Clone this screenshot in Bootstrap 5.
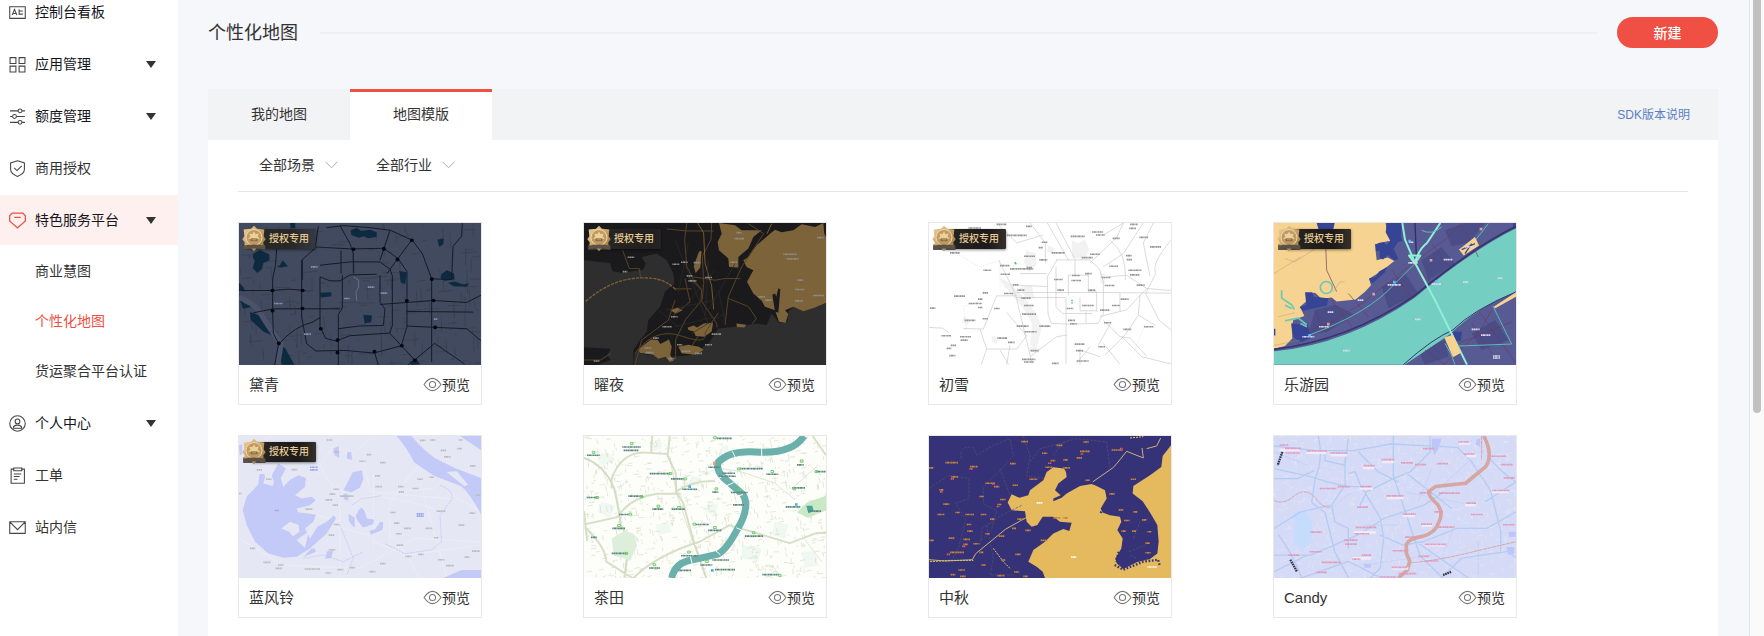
<!DOCTYPE html>
<html lang="zh-CN">
<head>
<meta charset="utf-8">
<meta name="viewport" content="width=device-width, initial-scale=1">
<title>个性化地图</title>
<link href="https://cdn.jsdelivr.net/npm/bootstrap@5.3.0/dist/css/bootstrap.min.css" rel="stylesheet">
<style>
body{font-family:"Liberation Sans","Noto Sans CJK SC",sans-serif;font-size:14px;line-height:20px;color:#333;background:#f6f7fb;height:100vh;overflow:hidden}
.side{width:178px;background:#fff}
.side-list{margin-top:-14px}
.side-list>li{margin:1px 0}
.side-link{height:50px;padding:0 22px 0 9px;color:#15151c;text-decoration:none}
.side-link.plain{color:#333}
.side-link.current{background:#fdf0ef}
.side-link svg{width:17px;height:17px;margin-right:9px;fill:none;stroke:#444;stroke-width:1}
.side-link.current svg{stroke:#f04f43;stroke-width:1.2}
.side-link .tri{margin-left:auto;border:5px solid transparent;border-top:7px solid #333;border-bottom:0}
.sub-list{padding-top:1px}
.sub-link{height:50px;padding-left:35px;color:#333;text-decoration:none}
.sub-link.current{color:#f04f43}
.work{padding:0 31px 0 30px}
.head{height:89px;padding-bottom:24px}
.head h1{font-size:18px;line-height:26px;font-weight:400;color:#333}
.head .rule{height:2px;background:#eff0f3;margin:0 20px 0 22px}
.btn-new{width:101px;height:31px;font-size:14px;line-height:20px;font-weight:500;background:#f04f43;color:#fff;border:0;padding:0}
.btn-new:hover{background:#e0443a;color:#fff}
.tabs{background:#f2f3f5;height:51px}
.tabs .tab-btn{width:142px;height:51px;border:0;border-top:3px solid transparent;background:none;color:#333;padding:0 0 4px}
.tabs .tab-btn.active{background:#fff;border-top-color:#f04f43}
.sdk{font-size:12px;color:#5b7ec4;margin-right:28px}
.panel{padding:0 30px}
.filters{height:52px;padding:0 21px 2px;gap:38px;border-bottom:1px solid #e6e6e6}
.filters select{width:79px;padding:0;border:0;font-size:14px;line-height:20px;color:#333;background:transparent url("data:image/svg+xml,%3Csvg xmlns='http://www.w3.org/2000/svg' viewBox='0 0 13 8' fill='none' stroke='%23aaa'%3E%3Cpath d='M.6.8l5.9 6 5.9-6'/%3E%3C/svg%3E") no-repeat right center/13px 8px}
.tiles{padding:30px 70px 0 0;row-gap:30px}
.tile{width:244px;border:1px solid #e8e8e8;border-radius:0}
.tile .map{height:142px;display:block;width:100%}
.tile-foot{height:39px;padding:0 11px 0 10px}
.tile-foot h2{font-size:15px;line-height:22px;font-weight:400}
.view-btn{color:#333;border:0;padding:0;font-size:14px;line-height:20px}
.view-btn svg{width:19px;height:15px;fill:none;stroke:#777;stroke-width:1}
.vip{left:3px;top:2px;height:27px}
.vip svg{width:24px;height:27px;position:relative;z-index:1}
.vip span{margin-left:-14px;height:20px;width:64px;padding:0 0 1px 17px;font-size:10px;line-height:19px;font-weight:500;color:#e8cb94;background:linear-gradient(90deg,#2a2725,#1b1919 70%,#34302c);border-radius:1px;box-shadow:0 1px 3px #0007;white-space:nowrap}
.dim .vip span{background:linear-gradient(90deg,#292827,#24221fdd 60%,#2b2a2c80)}
.bar{width:15px;background:#fafafa;border-left:1px solid #e4e4e4;padding:0 3px}
.bar i{width:8px;height:413px;background:#c1c1c1;border-radius:0 0 4px 4px;display:block}
.lb{fill:none;stroke-width:5;stroke-dasharray:4 1 7 1 3 1}
.ln{fill:none;stroke-linejoin:round}
</style>
</head>
<body class="d-flex">
<svg width="0" height="0" class="position-absolute">
<defs>
<linearGradient id="gold" x2="1" y2="1"><stop stop-color="#f1d59c"/><stop offset=".5" stop-color="#c9a468"/><stop offset="1" stop-color="#8c6c3d"/></linearGradient>
<symbol id="medal" viewBox="0 0 72 80"><path d="M4 58h66v16H4z" fill="#3a352f"/><path d="M36 2l9 9 22 2-2 20 6 9-7 9 1 14-19 2-10 11-10-11-19-2 1-14-7-9 6-9-2-20 22-2z" fill="url(#gold)"/><circle cx="36" cy="37" r="24" fill="#c09a62" stroke="#f3dcaa" stroke-width="3"/><path d="M36 19l5 8 9-2-3 10 7 6H18l7-6-3-10 9 2z" fill="#ecd19a"/><path d="M26 40h20v8H26z" fill="#7d5f36"/><path d="M29 44h14" stroke="#edd095" stroke-width="2"/><path d="M4 62q32-8 66 0v12q-34-8-66 0z" fill="#5c5145"/></symbol>
<symbol id="eye" viewBox="0 0 18 14"><path d="M1 7q4-5.800 8-5.800T17 7q-4 5.800-8 5.800T1 7z"/><circle cx="9" cy="7" r="2.900"/></symbol>
</defs>
</svg>

<nav class="side flex-shrink-0 vh-100 overflow-hidden" aria-label="控制台">
<ul class="side-list list-unstyled mb-0 d-flex flex-column">
<li><a href="#" class="side-link d-flex align-items-center"><svg viewBox="0 0 16 16"><path d="M.7 2.500h14.600v11H.7zM3 10.500L5.200 5l2.200 5.500M3.800 9h2.800M9.500 5v5M9 6.500h4M9 9.500h4"/></svg>控制台看板</a></li>
<li><a href="#" class="side-link d-flex align-items-center"><svg viewBox="0 0 16 16"><path d="M1 1.500h5.500V7H1zM9.500 1.500H15V7H9.500zM1 9.500h5.500V15H1zM9.500 9.500H15V15H9.500z"/></svg>应用管理<span class="tri"></span></a></li>
<li><a href="#" class="side-link d-flex align-items-center"><svg viewBox="0 0 16 16"><path d="M1 2.700h7.500M12.300 2.700H15M1 8h2.300M7 8h8M1 13.500h7.500M12.300 13.500H15"/><circle cx="10.400" cy="2.700" r="1.800"/><circle cx="5.200" cy="8" r="1.800"/><circle cx="10.400" cy="13.500" r="1.800"/></svg>额度管理<span class="tri"></span></a></li>
<li><a href="#" class="side-link plain d-flex align-items-center"><svg viewBox="0 0 16 16"><path d="M8 .8l6.500 2v6Q14.500 13 8 15.500 1.500 13 1.500 8.800v-6zM4.800 7.500L7.500 10l4.500-4.500"/></svg>商用授权</a></li>
<li><a href="#" class="side-link current d-flex align-items-center"><svg viewBox="0 0 16 16"><path d="M3 1h10l2.400 2.500v5L8 15 .6 8.500v-5zM5 5h6"/></svg>特色服务平台<span class="tri"></span></a>
<ul class="sub-list list-unstyled">
<li><a href="#" class="sub-link d-flex align-items-center">商业慧图</a></li>
<li><a href="#" class="sub-link current d-flex align-items-center">个性化地图</a></li>
<li><a href="#" class="sub-link d-flex align-items-center">货运聚合平台认证</a></li>
</ul></li>
<li><a href="#" class="side-link d-flex align-items-center"><svg viewBox="0 0 16 16"><circle cx="8" cy="8" r="7.300"/><circle cx="8" cy="6" r="2.200"/><path d="M4 12.500q0-3 4-3t4 3z"/></svg>个人中心<span class="tri"></span></a></li>
<li><a href="#" class="side-link plain d-flex align-items-center"><svg viewBox="0 0 16 16"><path d="M4.500 2H2v13.300h12.500V2H12M4.500 1h7.500v2.500H4.500zM4.500 6.500h7M4.500 9h5.500M4.500 11.500h3.500"/></svg>工单</a></li>
<li><a href="#" class="side-link plain d-flex align-items-center"><svg viewBox="0 0 16 16"><path d="M.7 2.500h14.600v11H.7zM1 3l7 7 7-7"/></svg>站内信</a></li>
</ul>
</nav>

<main class="work flex-grow-1 d-flex flex-column vh-100 overflow-hidden">
<header class="head d-flex align-items-center flex-shrink-0">
<h1 class="mb-0">个性化地图</h1><span class="rule flex-grow-1"></span>
<button type="button" class="btn btn-new rounded-pill">新建</button>
</header>
<div class="tabs d-flex align-items-center flex-shrink-0">
<button type="button" class="tab-btn">我的地图</button>
<button type="button" class="tab-btn active">地图模版</button>
<a href="#" class="sdk ms-auto text-decoration-none">SDK版本说明</a>
</div>
<section class="panel bg-white flex-grow-1">
<div class="filters d-flex align-items-center">
<select class="form-select" aria-label="场景"><option>全部场景</option></select>
<select class="form-select" aria-label="行业"><option>全部行业</option></select>
</div>
<div class="tiles row row-cols-4 mx-0">

<div class="col px-0"><article class="card tile dim">
<svg class="map" viewBox="27 38 726 427" preserveAspectRatio="none" data-seed="3" data-street="#373d50" data-count="220">
<path fill="#414a5f" d="M27 38h726v427H27z"/><g class="streets"></g>
<g fill="#0e2a40"><path d="M70 130l20-10 28 12 0 18-18 8-4 18-14 12-14-14 6-22-6-12zM362 60l18-8 14 10 26-4 20 8v14l-26 4-12-6-16 4-22-8zM622 88l18-4v18l-12 8zM634 192l16-12 22 10 2 18-30 4-12-8zM654 218l20-4 24 8 20-2-8 10-40-2zM400 314l26 2-2 20-20 4zM508 182l22 4-4 36-14-6zM145 404l20 10 28 50h-38zM27 218l14 14 4 12-18-2zM27 262l16 18 26 10-30 6zM60 306l30 10 14 14-6 8 20 10 12 30-30-14-38-34zM270 248l34-2v12l-32 4zM140 170l10-6 8-14 16 18-20 4zM540 455l20-8 10 16-26 2zM180 38h16v16h-14z"/></g>
<path d="M27 262q46 16 66 50t60 90l-10 62" class="ln" stroke="#4d526b" stroke-width="16"/>
<g class="ln" stroke="#141a28" stroke-width="3"><path d="M140 115q0 50-12 90v100l2 65 16 30-12 65M27 241h100l50-4 50 4M70 308l60-12h200M255 110l110 6 96-2 42 30 28 40v165l-17 58-82 22-90-8-84 2-28-22-15-80V150l40-36 10-66M270 165l90-10h90l30 22 7 20v150l-8 22-120 8-40 16-32-8-17-36V200M270 200l30 12h30l30-18 80-2M337 195v98l-12 20v152M325 356l60-8 75-2 5-50-15-20v-80M290 52l50-6 80 6 62 8 65 30 30 40 28 76v250M545 90l-44 58-30 42M480 60l-30 90M330 46l30 54 10 30v60M697 38l-2 40-26 30-4 100-60-2M450 283l160-12 100 6 43-22M530 304l200 2M530 348l180 8 43 36M146 402q50-55 100-65l25-15M480 370l74 80 60-50 90 62M554 450l-20 15M433 425l12 40M333 120v70M217 150v60"/></g>
<g stroke="#295368" stroke-width="1" stroke-dasharray="4 5" class="ln"><path d="M142 115q0 50-12 90v100M255 112h200M272 157h170M219 150v200l25 75h150M450 285h160M330 350h130"/></g>
<g stroke="#06080f" stroke-width="11" stroke-linecap="round"><path d="M127 241h1M217 241h1M127 302h1M370 117h1M461 116h1M502 148h1M545 90h1M605 207h1M610 271h1M615 352h1M530 272h1M515 407h1M433 425h1M322 390h1M322 428h1M272 356h1M554 451h1M146 400h1M217 295h1"/></g>
<path class="lb" stroke="#858eb0" d="M243 170h20M413 231h20M452 249h20M342 265h18M132 280h26M222 372h22M612 327h10"/><path d="M370 200l16 10v20l-8 16 2 26" class="ln" stroke="#666d87" stroke-width="3"/>
</svg>
<div class="vip position-absolute d-flex align-items-center"><svg><use href="#medal"/></svg><span>授权专用</span></div>
<div class="tile-foot d-flex justify-content-between align-items-center"><h2 class="mb-0">黛青</h2><button type="button" class="view-btn btn d-flex align-items-center"><svg><use href="#eye"/></svg>预览</button></div></article></div>

<div class="col px-0"><article class="card tile dim">
<svg class="map" viewBox="27 38 726 427" preserveAspectRatio="none">
<path fill="#1a1a1d" d="M27 38h726v427H27z"/>
<path fill="#2e2e2f" d="M27 150L75 155 105 158 112 182 140 188 205 178 212 160 200 140 245 130 275 150 295 190 298 220 270 245 255 290 220 330 215 365 195 390 175 420 175 465 27 465zM753 270L720 290 685 300 655 290 640 305 638 335 612 338 590 310 575 345 545 340 480 350 430 355 400 400 350 435 290 440 220 435 180 425 176 465 753 465z"/>
<path fill="#1a1a1d" d="M27 412l80 4-10 20 10 14-40 15H27z"/>
<path fill="#7d6339" d="M432 38L480 45 500 60 560 60 535 80 520 115 490 140 490 172 462 170 460 145 432 120 428 95 440 70zM585 70L600 58 620 66 655 60 680 42 720 50 745 38 748 70 753 80V278L720 292 685 303 655 290 630 300 640 312 632 338 612 335 600 300 570 290 560 272 535 250 516 215 535 180 515 170 505 150 520 140 545 105zM372 124l8-2-2 20-2 30-14 16-6-20zM338 352l18-6 10 6 20-12 28-2-4 26-22 16-26-2-6-14-16-4zM190 418l38-30 20 2 8 12 26-14 8 22-4 26 10 16-12 4-12-16-22 6-16-12-40-6zM310 410l30-6 32 6 14 10-26 14-40-4zM484 340l30 4-6 8-22-1zM285 300l22-8 16 8-20 10z"/>
<path d="M592 254l8-4 4 10 6-26 6 4-6 70-10-4z" fill="#1a1a1d"/>
<g class="ln" stroke="#574224" stroke-width="3"><path d="M335 38l-6 50 6 80 20 40 25 30-2 32 48 72 0 10M410 38l-2 50-26 50 4 80-4 50-50 60-30 60v60M355 200l65 10 30-5h46M180 430q60-80 140-52t70-10l40-60M276 56l60 6 80 0M460 265l60 24 24 36-12 16M520 40l46 30-66 100-40 90-10 84M300 270l-20 60-80 60-20 75M143 120l20 55h30l4 30M27 450h50l30-20M330 205l15 70-50 40M380 240l-40-40M300 236h50M370 378l-20 30"/></g>
<path class="ln" stroke="#a97a2c" stroke-width="2" d="M368 38l18 30 4 90 20 70 6 70M590 40l-14 30"/>
<path class="ln" stroke="#7b6037" stroke-width="4" stroke-dasharray="10 3" d="M32 274q90-80 195-70 45 3 77 36"/>
<path class="ln" stroke="#302b25" stroke-width="2" d="M300 90l100 250M270 300l150-30M300 350l120-30M400 150l-10 180M340 100l-30 150M420 180l-100 120M480 160l-80 140M350 370l100-60M250 300l60 50M430 240l20 90"/>
<path class="lb" stroke="#8d8b88" d="M158 141h20M143 184h14M292 162h22M318 156h20M356 157h22M335 197h18M340 212h24M390 202h22M478 85h30M484 67h16M625 132h40M635 146h36M668 210h16M660 238h28M660 272h24M714 256h34M466 156h20M262 350h28M410 372h28M390 404h22M212 428h24M306 404h16M550 260h20M570 270h20M726 82h20M288 320h20M208 414h22M234 384h18M56 453h18M320 424h26M360 430h22M280 446h18"/>
</svg>
<div class="vip position-absolute d-flex align-items-center"><svg><use href="#medal"/></svg><span>授权专用</span></div>
<div class="tile-foot d-flex justify-content-between align-items-center"><h2 class="mb-0">曜夜</h2><button type="button" class="view-btn btn d-flex align-items-center"><svg><use href="#eye"/></svg>预览</button></div></article></div>

<div class="col px-0"><article class="card tile">
<svg class="map" viewBox="27 38 726 427" preserveAspectRatio="none">
<path fill="#fff" d="M27 38h726v427H27z"/>
<path fill="#f2f2f3" d="M455 90l20 10 20-14 12 30-10 30-40-4zM318 120l30 10 0 36-22 20-14-30zM240 200l30 20 40 40 40 50 16 40-20 80-16-30 6-60-30-50-60-70zM540 190h16v30h-14zM300 230l36-4 8 40-30-6zM215 376l20 6-6 20-14-6zM330 410l30 6-8 12-24-3zM130 320l20 10-8 14-16-8zM385 105l20 10-10 16-14-8z"/>
<g class="ln" stroke="#c8c8ca" stroke-width="2"><path d="M382 38l64 112M408 38l58 110M330 38l46 60v60M290 225l92 4M290 247h260l203 2M290 262h145M438 262v200M410 150l-28 50 2 110 10 30 50 2 90-2 16-30V215l-12-40-30-26h-100zM445 195v60M408 170v120l20 20h90M445 195h60v50h25v60M465 150v46M480 262v40h50M498 305v34M550 170l60-40 60-92M510 158l80-76 20-44M570 90q50 40 46 110l0 10M610 38l-60 36M700 38l-30 60 20 100M560 200l60-5 60 40 73 6M680 235l-60 64-80 20M753 90q-60 70-46 100l-30 60 40 80 36 30M600 250v54M660 255l-5 60-40 60-60 60M655 315l50 30M550 330l50 50 30 4 50 54M605 380l60 60 88 22M27 352l40 2 20 14M130 355l60 2 40-100 60 0M180 357l20 60 90 0 30-40-60-70M200 417l-16 46M240 420l26 43M270 405l-10 58M330 440l80-60 30-5M230 38l60 60M236 150l50 100 50 210M300 190h80M480 420v44M480 420l60 20M550 400l50 63M510 410l-40 50M290 98l80-24M575 335l-40 70"/></g>
<g class="ln" stroke="#ddd" stroke-width="2" stroke-dasharray="3 4"><path d="M110 130l70 40 60-20M240 150v80M140 360l-10-70 60-20M555 320l60 80M680 330l-40 100"/></g>
<path class="lb" stroke="#969696" d="M145 53h38M230 42h30M260 75h60M318 48h18M365 96h18M356 112h12M395 128h40M452 78h42M516 65h34M528 74h26M578 84h22M630 42h24M628 54h20M658 81h26M690 110h34M618 136h18M620 148h16M568 168h26M510 132h30M485 142h34M312 138h34M358 149h24M240 166h28M270 176h70M320 172h16M90 128h30M190 180h24M242 192h28M402 208h26M456 196h24M495 190h20M454 211h30M545 202h26M554 226h30M650 225h24M505 240h22M412 240h20M252 250h28M292 240h22M278 224h18M102 258h34M188 248h16M174 267h14M146 280h40M174 292h14M30 294h16M222 295h18M304 264h28M312 286h30M306 312h42M290 348h36M358 348h34M314 365h36M134 331h32M188 326h16M64 377h30M120 380h34M122 390h22M92 406h16M80 415h14M88 437h18M232 384h30M264 397h20M440 295h20M486 286h36M540 300h28M576 286h24M602 267h24M444 331h22M450 341h20M552 338h22M610 358h24M672 350h28M464 402h30M535 410h20M468 422h22M332 422h24M306 448h40M312 456h30M396 460h20M470 453h36M625 180h40M630 194h28"/>
<path class="ln" stroke="#37c137" stroke-width="4" d="M284 156l5 6M454 271h4M454 278h4"/>
</svg>
<div class="vip position-absolute d-flex align-items-center"><svg><use href="#medal"/></svg><span>授权专用</span></div>
<div class="tile-foot d-flex justify-content-between align-items-center"><h2 class="mb-0">初雪</h2><button type="button" class="view-btn btn d-flex align-items-center"><svg><use href="#eye"/></svg>预览</button></div></article></div>

<div class="col px-0"><article class="card tile">
<svg class="map" viewBox="27 38 726 427" preserveAspectRatio="none">
<path fill="#585a94" d="M27 38h726v427H27z"/>
<path fill="#4a4d87" d="M150 300l60-16 60 30-80 50-60 10zM350 230l70-40 40 60-90 44zM470 150l60-40 40 50-80 50zM540 60l60-22h60l-50 60-50 10zM620 370l70-40 40 60-80 30zM460 420l80-30 10 50-70 24z"/>
<path fill="#f6d390" d="M27 38H362L366 70 385 90 340 98 332 122 335 150 368 142 388 152 350 182 312 206 318 225 300 245 272 268 215 274 200 262 170 266 150 248 122 250 128 270 105 290 118 318 85 330 80 350 82 385 60 408 27 416z"/>
<path fill="#354494" d="M366 38h44l-2 40 4 14-14 4-12 20 14 30-12 4-20-16-14 14-10-6 0-20-12 0-2-20 26-6 8 8 12-12-14-26zM312 206l20-6 10-16 24-14-6 16-38 34zM120 246l22 0 4 14 44 4-4 22-72 16-10-10 20-8zM78 340l50 4 10 40-30 12-22-14zM27 356h4v20h-4zM155 38h54l-4 18-44 2zM744 38h8v20h-8zM565 365l26 0-4 26-20 4z"/>
<path fill="#74cec2" d="M27 424q220-22 420-160Q620 120 753 54v192q-110 40-200 128l-134 90H27z"/>
<path class="ln" stroke="#34346e" stroke-width="5" d="M27 418q220-26 420-160Q620 114 753 48"/>
<path class="ln" stroke="#34346e" stroke-width="3" d="M415 464q90-80 148-104 60-60 190-115"/>
<path class="ln" stroke="#6c3b61" stroke-width="2" d="M130 360l60-20 100-60 140-110 120-90 40-42M200 270l60 80M250 250l60 70M380 180l60 80M440 150l60 70M500 100l50 66M150 300l30 66M600 60l40 80M620 340l60 90M680 300l-40 70-100 90M580 400l160-64M640 300l113 160M480 420l60 44M182 100l3 80 30 64"/>
<path class="ln" stroke="#90efd7" stroke-width="6" d="M412 38l8 50 30 70q10-40 36-60l40-60M450 158l56 104 100 202"/>
<path class="ln" stroke="#2d2f70" stroke-width="4" d="M450 38l4 100"/>
<path class="ln" stroke="#8df1d4" stroke-width="6" d="M432 136l34 0-16 24z"/>
<path class="ln" stroke="#59bdb0" stroke-width="3" d="M450 160q-30 30-60 60-80 90-260 156M470 60q30 16 60-10M600 130l70-90M540 400q20 30 30 64M580 408l160-6-56-114"/>
<circle cx="184" cy="232" r="18" class="ln" stroke="#69c8b8" stroke-width="5"/>
<path class="ln" stroke="#69c8b8" stroke-width="5" d="M50 240v24l30 20 8 14M60 332l40-8 25 20M60 285l20 10M106 340l20 10"/>
<path fill="#f6d390" d="M538 382l26-8 24 54-24 14zM686 290l67-44v14l-62 34zM582 118l48-38 12 26-46 30z"/>
<path class="ln" stroke="#4b4c83" stroke-width="4" d="M590 118l40-18M600 130l20-30"/>
<path class="ln" stroke="#a4856c" stroke-width="1" d="M27 190l80-50M205 245l20-30 14 0M27 406l80-16M40 320l50-12M60 145l30 10 60-40"/>
<path class="lb" stroke="#d8d8f0" d="M536 148h26M368 224h40M278 270h18M188 306h18M112 380h36M162 350h30M500 222h28M620 358h24M648 375h28M684 438h22M684 444h22M234 422h20M594 216h16M698 204h14M450 328h18M430 158h28M600 110h30M432 96h14"/>
<path class="ln" stroke="#e29ba0" stroke-width="8" d="M494 150h8M322 252h8M186 342h8M644 56h8"/><path class="ln" stroke="#5eb8ff" stroke-width="8" d="M430 92h8M384 216h8M510 214h8M130 376h8"/>
</svg>
<div class="vip position-absolute d-flex align-items-center"><svg><use href="#medal"/></svg><span>授权专用</span></div>
<div class="tile-foot d-flex justify-content-between align-items-center"><h2 class="mb-0">乐游园</h2><button type="button" class="view-btn btn d-flex align-items-center"><svg><use href="#eye"/></svg>预览</button></div></article></div>

<div class="col px-0"><article class="card tile">
<svg class="map" viewBox="27 32 726 427" preserveAspectRatio="none">
<path fill="#e5e7f5" d="M27 32h726v427H27z"/>
<g class="ln" stroke="#eff0f5" stroke-width="2"><path d="M330 32l-60 90 60 100v237M250 130l130 100 130 130 60 99M400 100l20 100 240 20M430 150v220M370 230l60-20 110 20 70 20M540 150l-60 80v130M480 200l130-10 60-60M27 340l130 80 230 10 170-90 193 10M600 80l-100 120M570 170l80 290M430 350l100 40 220-30M27 70l100-38M300 300l120 30M350 100l80-68M650 200l103 60M230 260l100 30"/></g>
<path fill="#c3caf7" d="M88 146L103 146 105 155 100 175 128 182 132 170 125 150 145 115 168 130 152 158 160 185 178 165 205 150 228 158 225 185 195 210 215 220 245 215 257 225 240 240 200 250 205 262 235 265 258 268 250 290 225 310 240 340 262 305 290 290 312 270 318 280 290 325 240 370 200 395 160 398 115 385 75 350 50 300 38 255 50 215 85 178z"/>
<path fill="#e5e7f5" d="M154 310l26-20 26 10 2 20-20 14-10-14zM200 345l35-25-4 22-6 26z"/>
<path fill="#c3caf7" d="M500 32h44q40 46 70 66l60 30 79 30v110q-30-60-60-86l-80-30-60-40q-26-50-53-80zM690 32h63v42zM640 459l54-24 59 0v24zM340 195l10-18 18-36 28-6 4 26-10 26-26 14zM310 70l16-8 2 36-14-8zM352 80l12 0 2 24-16-4zM385 255l10-8 8 10 8 24 22 2-4 14-30 10-16-20-6-14zM418 318l18-6 14-22 10 2-2 22-34 14zM356 266l18 12 0 30-10-10-8-12zM244 370l10 0 4 10-38 16zM290 380l20-6-6 24-18 4zM27 60l10-4v30l-8 4zM340 206l12 0 4 20-14-3zM60 84l14-6v8z"/>
<path fill="#e5e7f5" d="M650 140l30-2 34 40-10 6z"/>
<path class="ln" stroke="#bcc5f5" stroke-width="2" stroke-dasharray="7 2" d="M365 240l30-20 60-8M630 180q50 20 30 50l-30 40 5 80-30 24-80 12-60-30M330 300l40 100-20 50M220 400l60-10 60 20 60-30"/>
<path class="lb" stroke="#bdbcbd" d="M290 44h18M310 80h18M388 108h18M410 88h14M450 112h18M435 152h16M436 184h20M504 184h18M506 200h16M548 190h18M562 162h16M598 156h14M620 258h26M480 262h18M492 294h16M522 310h22M498 326h18M586 310h22M612 338h14M686 300h18M570 45h16M600 44h18M632 75h16M682 70h14M642 95h20M720 122h18M738 210h14M718 264h18M500 360h20M526 394h18M564 388h18M624 404h20M648 422h24M450 416h18M418 440h18M322 434h18M358 428h18M286 444h18M224 432h46M100 412h22M144 420h18M136 430h20M60 370h16M296 374h20M296 330h18M312 298h18M308 240h16M286 224h22M330 213h40M310 192h18M226 252h22M184 133h18M108 162h18M80 134h16M27 205h8M298 207h18M704 396h14M726 378h24M686 44h12"/>
<path class="lb" stroke="#9aa5ef" d="M134 256h12M240 126h24M240 134h24M560 266h22M560 273h22"/>
</svg>
<div class="vip position-absolute d-flex align-items-center"><svg><use href="#medal"/></svg><span>授权专用</span></div>
<div class="tile-foot d-flex justify-content-between align-items-center"><h2 class="mb-0">蓝风铃</h2><button type="button" class="view-btn btn d-flex align-items-center"><svg><use href="#eye"/></svg>预览</button></div></article></div>

<div class="col px-0"><article class="card tile">
<svg class="map" viewBox="27 32 726 427" preserveAspectRatio="none" data-seed="9" data-street="#d8dcc6" data-count="800" data-short="1">
<path fill="#fdfefa" d="M27 32h726v427H27z"/>
<path fill="#eff9f2" d="M60 90l40-10 20 30-40 10zM220 50l40 0 0 20-30 10zM350 150l30 10-10 24-30-4zM560 60l40 10-10 30-30-6zM240 300l40-10 10 30-40 10zM600 290l40 10-10 40-40-10zM500 360l60 10-10 40-50-10zM680 380l40 0 10 40-40 10zM400 230l30 10-10 30-30-10zM80 230l40 10-14 40-40-20zM440 60l20 0 0 20-20 0z"/><g class="streets"></g>
<g class="ln" stroke="#d7dfc8" stroke-width="6"><path d="M284 32l-6 60 24 50 2 60 20 30 30 110 40 117M110 190l0-30q30-80 100-78l70 4M27 98q60 20 90 90 14 50 20 110l25 40-12 120M27 298l100-22q40-60 120-70h70M34 310q60 60 60 100l80 50q70-70 200-110l90-50 180 54 80-30h40M300 200q60-36 120-32M753 90l-40-58M232 32l-4 50M27 258l10 90"/></g>
<path class="ln" stroke="#dfe5d2" stroke-width="3" d="M440 130l60 10 100 34 60 50M730 120l-80 70M590 420l30 39M680 330l60 80"/>
<path class="ln" stroke="#cbd9b4" stroke-width="2" d="M27 98q60 20 90 90l20 110 25 60-16 100M284 92l20 110 50 150 40 107"/>
<path fill="#ddeedb" d="M110 340l40-24 26 10 10 36-20 44-50-14z"/><path fill="#c9e8c4" d="M666 262l30-30 57-20v44l-54 22z"/><path fill="#4aa29d" d="M694 242l18 0 4 16-16 6z"/>
<path class="ln" stroke="#6cb0ac" stroke-width="21" d="M290 459q10-46 60-54l76-17q26-10 58-70 44-72 20-110l-60-52q-22-24-14-46 34-34 110-30 110 8 147-48"/>
<path class="ln" stroke="#fdfefa" stroke-width="3" d="M346 394l6 24M420 375l16 14M484 308l14 6M430 160l18-10M472 78l10 20M560 66v28M450 184l26-12M482 214l22-6"/>
<path class="lb" stroke="#5b8583" d="M426 39h44M142 65h56M146 75h44M36 90h38M224 145h60M288 161h40M322 192h44M160 213h44M412 201h18M400 126h36M442 144h38M432 153h50M494 130h70M574 147h36M666 119h20M724 139h28M652 188h38M632 245h44M700 258h38M132 268h30M112 310h38M35 217h34M232 252h34M290 252h40M362 298h40M400 316h40M510 333h54M48 337h18M110 385h44M222 429h34M310 436h38M318 392h50M376 420h36M412 405h50M420 434h60M562 449h50M468 202h50M474 239h34"/>
<g class="ln" stroke="#6dcf6b" stroke-width="3"><path d="M166 52h8v6h-8zM52 78h8v6h-8zM416 34h8v6h-8zM282 142h8v6h-8zM326 158h8v6h-8zM420 188h8v6h-8zM196 212h8v6h-8zM246 240h8v6h-8zM308 244h8v6h-8zM162 264h8v6h-8zM128 298h8v6h-8zM354 294h8v6h-8zM416 304h8v6h-8zM532 320h8v6h-8zM338 378h8v6h-8zM150 382h8v6h-8zM234 416h8v6h-8zM392 406h8v6h-8zM610 448h8v6h-8zM588 136h8v6h-8zM654 188h8v6h-8zM676 104h8v6h-8zM720 136h8v6h-8zM488 128h8v6h-8zM62 214h8v6h-8zM490 190h8v6h-8z"/></g>
<path class="ln" stroke="#4db4e8" stroke-width="8" d="M340 184h8M408 436h8M660 238h8"/><path d="M414 114h8" class="ln" stroke="#e6a568" stroke-width="10"/>
</svg>
<div class="tile-foot d-flex justify-content-between align-items-center"><h2 class="mb-0">茶田</h2><button type="button" class="view-btn btn d-flex align-items-center"><svg><use href="#eye"/></svg>预览</button></div></article></div>

<div class="col px-0"><article class="card tile">
<svg class="map" viewBox="27 32 726 427" preserveAspectRatio="none">
<path fill="#353277" d="M27 32h726v427H27z"/>
<path fill="#e5ba5e" d="M753 60L728 92 724 125 690 150 640 182 638 205 668 228 690 262 712 300 716 350 712 385 690 402 650 412 610 432 590 415 586 400 604 370 608 340 592 315 604 290 600 275 570 270 548 262 542 250 560 220 555 195 530 182 515 176 480 182 440 205 425 218 400 228 400 220 422 210 405 195 415 175 440 155 438 140 432 130 400 126 380 140 370 165 330 195 325 210 298 218 275 207 263 232 275 255 315 258 320 290 335 305 352 300 368 275 400 275 420 290 455 293 448 318 430 312 400 325 375 350 340 375 325 410 350 425 368 440 375 459 753 459z"/>
<g class="ln" stroke="#353277" stroke-width="7" stroke-dasharray="5 5"><path d="M584 420l26 14 60-24 44-6 6 20M606 270l4 40-10 14M596 380l-8 30M548 250l-6 14"/></g>
<g class="ln" stroke="#56536f" stroke-width="2" stroke-dasharray="8 4"><path d="M124 100q-10-40 36-34l10 24 50-30 50-20 10 50-40 46-50 50 0 50 40 20-16 60-30 30M27 190l60-40 60 10v60l-40 14 30 50-20 80-20 40M310 32l20 60-10 60 50 6M400 90l30-40 40-10 90 10 10 80M180 360l6-50 60-40 60-30M200 300l20 100-10 50 70 0M640 340l20-50 30-10M627 380l50-20M630 390l20 10M240 130l30 80M330 110l30-40 80-20"/></g>
<path class="ln" stroke="#c7b27e" stroke-width="3" d="M27 404l50 4 80-4 10-18 90-74 64-36M518 170l60-42 10-10 32-40 50 20-4-30M680 70l30-8 12-24"/>
<path class="ln" stroke="#e0c463" stroke-width="3" stroke-dasharray="6 3" d="M30 410l60-4 70 0M220 370l30 40 20 20M630 38l40-4"/>
<path class="lb" stroke-width="6" stroke="#c8823d" d="M304 49h20M366 84h16M410 60h18M490 50h16M480 78h30M470 98h16M575 74h34M76 112h38M150 124h24M270 115h18M376 126h22M430 104h14M430 128h20M392 106h14M328 162h24M27 128h14M94 155h20M196 174h30M222 184h16M278 180h16M178 214h14M240 223h18M232 238h12M58 194h12M70 237h18M52 268h22M106 262h14M136 268h26M182 268h18M210 282h14M292 282h22M140 298h14M142 318h16M196 326h14M236 333h18M276 310h12M316 316h16M86 339h18M130 343h20M160 356h18M90 382h42M130 358h14M178 382h12M286 388h16M244 405h12M184 420h14M115 435h20M28 346h14M282 441h16M92 449h14M120 454h18M232 452h22M310 454h14M362 346h20M400 278h22M430 278h14M568 206h16M496 165h14M632 162h16M596 254h14M612 286h18M604 318h14M636 318h12M666 284h14M682 320h12M676 354h14M676 383h16M640 260h12"/>
<path class="lb" stroke="#d35d68" d="M216 176h8M92 161h10M148 131h10M384 114h10M60 200h8M126 364h10M230 244h8M80 388h10M482 86h8M600 70h8"/>
<path class="lb" stroke="#fff9e7" d="M350 233h18M453 396h16M682 426h28"/>
</svg>
<div class="tile-foot d-flex justify-content-between align-items-center"><h2 class="mb-0">中秋</h2><button type="button" class="view-btn btn d-flex align-items-center"><svg><use href="#eye"/></svg>预览</button></div></article></div>

<div class="col px-0"><article class="card tile">
<svg class="map" viewBox="27 32 726 427" preserveAspectRatio="none" data-seed="5" data-street="#e4e7f3" data-count="800" data-short="1">
<path fill="#d5daf7" d="M27 32h726v427H27z"/><g class="streets"></g>
<path fill="#c5dcfd" d="M88 262l34-2 20 30-2 60-26 24-28-16z"/><path fill="#bfc5fb" d="M500 40l30 0-10 30-12 20-6-20zM724 366h24v20l-18 4zM296 416h22v12h-20zM636 40l10 0v24l-14-6zM730 320h22v16h-20z"/>
<g class="ln" stroke="#b5ccf2" stroke-width="4"><path d="M160 32q16 70-10 130l-10 70 40 30 30 120 40 75M27 62l130 14 110 0 110-20 200 10 40 40 60 90 30 122 0 60M27 130l110 24 50 16 60 14 70 0M180 76l0 30 60 14 10-80M385 32v120q30 90 60 180l20 60 70 69M240 100v80l-40 60 10 50 40 20 0 60M250 145l20-6 16 40 60 100 10 60-10 90-30 30M27 160h70l50-24M285 240l20-40 80-40 50-20 60-60 0-48M27 310l80-50 90-20M27 390l110 0 140-60 80-50 120-40 60-40M345 330l70 30 60-10 100-40 90 0 88-50M27 440l100-50M110 459q-30-80-70-130M280 80l60 60 60 30M666 90q50 60 87 80M530 459l60-60 140-20 23 20M660 230l93-60M420 140l140 110M350 459l-100-50-140 50M440 340l170 119"/></g>
<g class="ln" stroke="#bcd0f2" stroke-width="2"><path d="M27 80l100 40M200 250l60-50M420 200l200 40M300 300h100M500 130l-40 100M620 100l-120 110M300 420l200-30M640 350v100M570 300l-40 100"/></g>
<path class="ln" stroke="#d6a6a3" stroke-width="11" d="M656 32q30 56 6 92l-60 50-90 10-20 14q-4 14 26 40 18 26 4 52-10 34-50 44-40 6-48 24l0 26 10 24-6 26-28 25"/>
<path class="ln" stroke="#d6a6ad" stroke-width="3" d="M27 226q30 14 60-14 40-30 70 14 20 24 40 20M650 32v72M434 414q100-10 190-34l129-30" stroke-dasharray="12 2"/>
<path class="ln" stroke="#373849" stroke-width="7" stroke-dasharray="5 2" d="M52 80l-14 40M76 404l20 36M534 450l26-10"/>
<path class="ln" stroke="#f1eaf8" stroke-width="8" d="M44 74h60M124 82h60M196 90h50M294 128h34M350 110h36M284 190h40M366 218h50M266 322h66M262 400h56M480 360h60M414 272h36M470 302h32M600 240h32M680 200h50M582 54h34M380 430h50M604 92h30"/>
<path class="lb" stroke="#e09abb" d="M44 59h26M60 69h48M62 83h42M124 77h62M196 83h52M296 121h34M350 103h38M408 113h36M450 118h34M516 115h34M474 70h34M580 50h34M596 86h34M674 93h50M708 118h36M716 158h34M682 196h52M164 190h50M218 184h36M286 184h36M364 212h52M464 203h36M522 204h62M604 234h30M618 268h36M508 260h26M414 267h38M468 297h34M516 306h52M276 246h34M272 307h62M268 326h44M136 321h36M238 345h40M240 357h36M420 336h50M480 358h62M382 377h48M134 380h36M70 390h32M170 412h58M154 442h32M262 402h24M290 390h28M380 427h48M400 446h54M480 408h40M460 394h34M714 299h36M344 456h50"/>
</svg>
<div class="tile-foot d-flex justify-content-between align-items-center"><h2 class="mb-0">Candy</h2><button type="button" class="view-btn btn d-flex align-items-center"><svg><use href="#eye"/></svg>预览</button></div></article></div>

</div>
</section>
</main>
<div class="bar flex-shrink-0 vh-100"><i></i></div>
<script src="https://cdn.jsdelivr.net/npm/bootstrap@5.3.0/dist/js/bootstrap.bundle.min.js"></script>
<script>
// Fine street network, repeatable for each map
document.querySelectorAll('.map[data-seed]').forEach(map => {
  let s = +map.dataset.seed;
  const rnd = n => (s = (s * 16807) % 2147483647) % n;
  const reach = map.dataset.short ? 14 : 50;
  let d = '';
  for (let i = 0; i < 20; i++) rnd(10);
  for (let i = 0; i < +map.dataset.count; i++) {
    d += `M${27 + rnd(726)} ${32 + rnd(430)}` + (rnd(2) ? `l${4 + rnd(reach)} ${-rnd(5)}` : `l${rnd(5)} ${4 + rnd(reach)}`);
  }
  map.querySelector('.streets').innerHTML = `<path fill="none" stroke="${map.dataset.street}" stroke-width="2" d="${d}"/>`;
});
</script>
</body>
</html>
